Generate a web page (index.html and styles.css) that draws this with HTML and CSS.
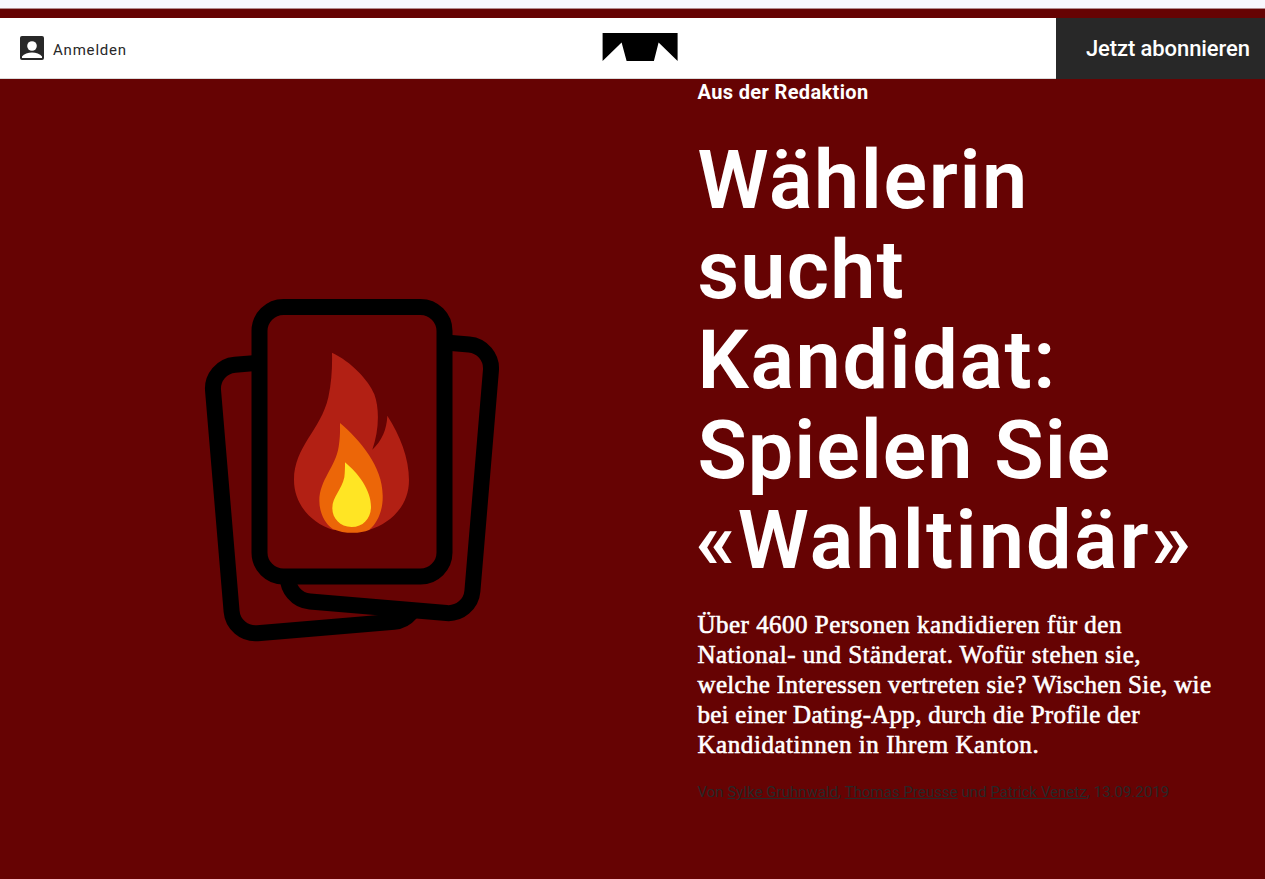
FILE: index.html
```html
<!DOCTYPE html>
<html lang="de">
<head>
<meta charset="utf-8">
<title>Wählerin sucht Kandidat: Spielen Sie «Wahltindär»</title>
<link rel="stylesheet" href="styles.css">
</head>
<body>
<div class="topstrip"></div>
<header class="bar">
  <a class="login">
    <svg width="24" height="24" viewBox="0 0 24 24"><rect width="24" height="24" rx="2" fill="#282828"/><circle cx="12" cy="10" r="4.8" fill="#fff"/><path d="M2 22V20.5C6 15 18 15 22 20.5V22Z" fill="#fff"/></svg>
    <span class="login-label">Anmelden</span>
  </a>
  <svg class="logo" width="76" height="28" viewBox="-.6 0 76 28"><path d="M0 0H75V28L56 9.5L51.3 28H24L19 9.5L0 28Z"/></svg>
  <a class="subscribe"><span class="subscribe-label">Jetzt abonnieren</span></a>
</header>
<main class="hero">
  <figure class="art">
    <svg width="330" height="380" viewBox="190 280 330 380">
      <g fill="#660303" stroke="#000" stroke-width="16">
        <rect x="222" y="358.5" width="185" height="269.5" rx="24" transform="rotate(-4.8 314.5 493.3)"/>
        <rect x="297" y="338.3" width="185" height="269.5" rx="24" transform="rotate(4.8 389.5 473)"/>
        <rect x="259.5" y="307" width="185" height="269.5" rx="24"/>
      </g>
      <g transform="translate(190 280) scale(.33333)">
        <path fill="#b22014" d="M426 218C482 244 536 300 553 343C570 390 566 455 547 509C575 482 590 450 592 407C630 465 657 535 657 600C657 680 600 730 537 750H430C360 728 312 670 312 600C312 500 393 450 415 352C425 305 427 260 426 218Z"/>
        <path fill="#ec6608" d="M450 429C510 480 578 560 578 645C580 690 562 730 537 750C510 762 460 762 427 746C402 728 388 695 388 662C388 600 437 560 446 500C451 470 450 450 450 429Z"/>
        <path fill="#ffe524" d="M465 547C505 580 543 630 543 680C543 715 520 741 485 741C450 741 427 715 427 685C427 650 455 630 463 592C465 575 465 560 465 547Z"/>
      </g>
    </svg>
  </figure>
  <article class="intro">
    <p class="format">Aus der Redaktion</p>
    <h1 class="title"><span class="t1">Wählerin</span><br><span class="t2">sucht</span><br><span class="t3">Kandidat:</span><br><span class="t4">Spielen Sie</span><br><span class="t5">«Wahltindär»</span></h1>
    <p class="lead"><span class="l1">Über 4600 Personen kandidieren für den</span><br><span class="l2">National- und Ständerat. Wofür stehen sie,</span><br><span class="l3">welche Interessen vertreten sie? Wischen Sie, wie</span><br><span class="l4">bei einer Dating-App, durch die Profile der</span><br><span class="l5">Kandidatinnen in Ihrem Kanton.</span></p>
    <p class="credit">Von <a>Sylke Gruhnwald</a>, <a>Thomas Preusse</a> und <a>Patrick Venetz</a>, 13.09.2019</p>
  </article>
</main>
</body>
</html>
```
FILE: styles.css
```css
* { box-sizing: border-box; }
body { margin: 0; height: 879px; overflow: hidden; background: #660303; color: #fff; font-family: Roboto, "Liberation Sans", sans-serif; }
p, h1, figure { margin: 0; }
.topstrip { height: 9px; background: #f8f7fd; border-bottom: 1px solid #b38a8e; }
.bar { margin-top: 9px; height: 61px; background: #fff; display: grid; grid-template-columns: 602px 1fr 209px; border-bottom: 1px solid #dadada; }
.login { display: flex; align-items: center; height: 59px; padding-left: 20px; gap: 9px; color: #282828; font-size: 15px; letter-spacing: .8px; }
.login-label { padding-top: 4px; }
.logo { margin-top: 15px; }
.subscribe { height: 61px; background: #282828; color: #fff; display: flex; align-items: center; padding-left: 30px; font-size: 22px; font-weight: 500; letter-spacing: -.1px; white-space: nowrap; }
.hero { display: grid; grid-template-columns: 697.5px 1fr; }
.art { padding: 201px 0 0 190px; }
.intro { white-space: nowrap; }
.format { font-size: 20px; line-height: 26px; font-weight: 700; letter-spacing: .36px; }
.title { margin-top: 31px; font-size: 81px; line-height: 90px; font-weight: 600; }
.t1 { letter-spacing: 1.6px; }
.t2 { letter-spacing: 1.2px; }
.t3 { letter-spacing: 1.6px; }
.t4 { letter-spacing: .9px; }
.t5 { letter-spacing: 2.2px; margin-left: -2px; }
.lead { margin-top: 24px; font-family: "Liberation Serif", serif; font-size: 25px; line-height: 30px; -webkit-text-stroke: .6px #fff; }
.l1 { letter-spacing: .48px; }
.l2 { letter-spacing: .45px; }
.l3 { letter-spacing: .33px; }
.l4 { letter-spacing: .26px; }
.l5 { letter-spacing: .56px; }
.credit { margin-top: 22px; font-size: 15px; line-height: 20px; color: #282828; letter-spacing: .03px; }
.credit a { text-decoration: underline; }
```
